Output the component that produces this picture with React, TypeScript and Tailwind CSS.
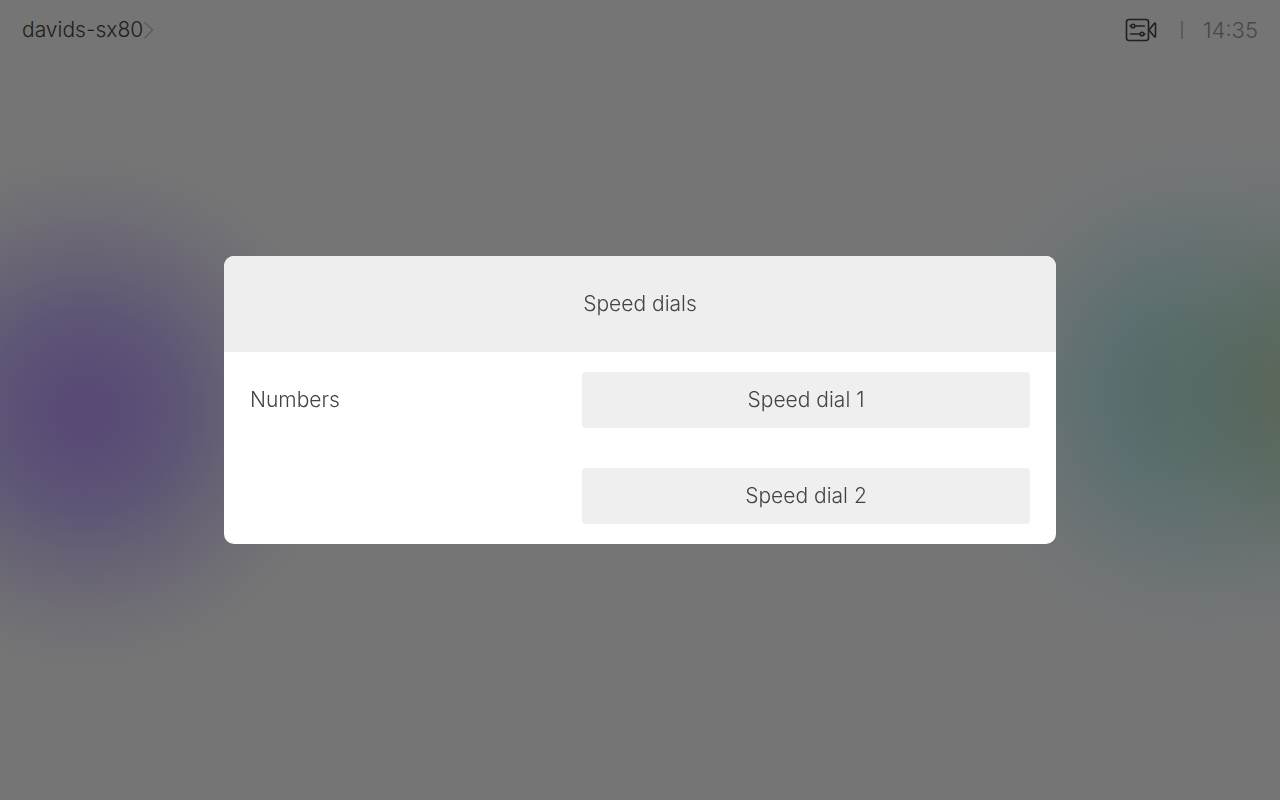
import React from "react";

const speedDials = ["Speed dial 1", "Speed dial 2"];

function ChevronIcon() {
  return (
    <svg width="10" height="18" viewBox="0 0 10 18" fill="none" stroke="#5c5c5c" strokeWidth="1.5" strokeLinecap="round" strokeLinejoin="round" aria-hidden="true">
      <path d="M1 1.5 8.5 9 1 16.5" />
    </svg>
  );
}

function CameraControlsIcon() {
  return (
    <svg width="32" height="24" viewBox="0 0 32 24" fill="none" stroke="#202020" strokeWidth="1.6" strokeLinecap="round" strokeLinejoin="round" aria-hidden="true">
      <rect x="1.5" y="1.5" width="22" height="21" rx="2.5" />
      <path d="M24 12 29 5.7Q30.5 4.2 30.5 6.2V17.8Q30.5 19.8 29 18.3Z" />
      <circle cx="8" cy="8" r="1.8" />
      <path d="M5 8H6M10 8H19.5" />
      <circle cx="17" cy="16" r="1.8" />
      <path d="M5.5 16H15M19 16H20" />
    </svg>
  );
}

function StatusBar() {
  return (
    <header className="flex h-15 items-center justify-between px-[22px]">
      <button type="button" className="flex items-center gap-px text-[#202020]">
        <span className="leading-7">davids-sx80</span>
        <ChevronIcon />
      </button>
      <div className="flex items-center">
        <button type="button" aria-label="Camera controls">
          <CameraControlsIcon />
        </button>
        <span className="mr-5 ml-6 h-[18px] w-[2px] bg-[#5c5c5c]" />
        <time className="text-[22px] leading-7 text-[#484848]">14:35</time>
      </div>
    </header>
  );
}

function SpeedDialPanel() {
  return (
    <section
      role="dialog"
      aria-modal="true"
      aria-labelledby="panel-title"
      className="w-[65%] overflow-hidden rounded-[10px] bg-white text-[#444444]"
    >
      <div className="flex h-24 items-center justify-center bg-[#eeeeee]">
        <h1 id="panel-title" className="leading-7">Speed dials</h1>
      </div>
      <div className="flex items-start justify-between px-[26px] py-5">
        <h2 id="numbers-label" className="leading-14">Numbers</h2>
        <div role="group" aria-labelledby="numbers-label" className="flex w-[448px] flex-col gap-10">
          {speedDials.map((name) => (
            <button key={name} type="button" className="h-14 rounded bg-[#efefef]">
              {name}
            </button>
          ))}
        </div>
      </div>
    </section>
  );
}

export default function App() {
  return (
    <div className="min-h-screen bg-[#757575] bg-[radial-gradient(circle_at_85px_51.5%,#584a75_0,#584a75_24px,#5f5676_100px,#656074_140px,#706e75_205px,#75757500_260px),radial-gradient(circle_at_107%_49%,#5e6048e0_0,#5c6450b0_80px,#5c675668_140px,#6a6e6030_190px,#75757500_250px),radial-gradient(circle_at_94%_49%,#52696a_0,#546b6a_50px,#5c6f70_100px,#667173_150px,#707476_205px,#75757500_260px)] font-['Inter','Liberation_Sans',sans-serif] text-[21px] font-light">
      <StatusBar />
      <main className="fixed inset-0 flex items-center justify-center">
        <SpeedDialPanel />
      </main>
    </div>
  );
}
